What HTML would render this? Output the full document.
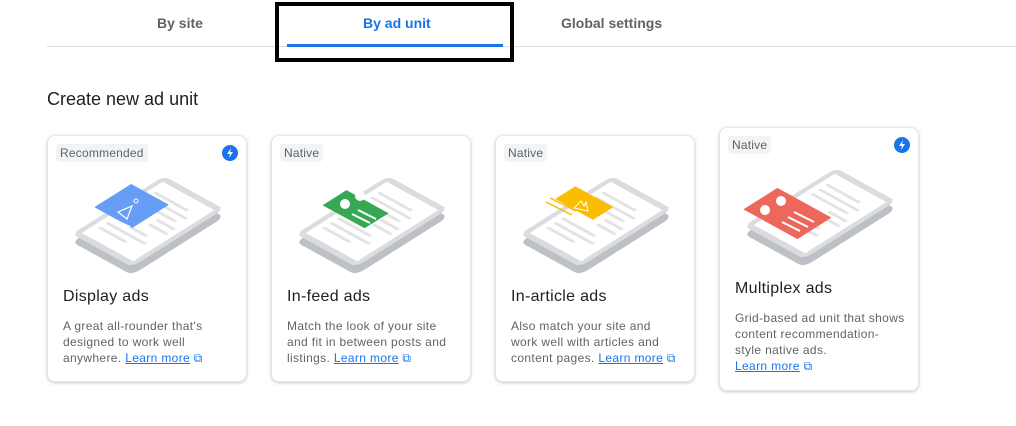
<!DOCTYPE html>
<html><head><meta charset="utf-8"><style>
body{margin:0;width:1016px;height:426px;background:#fff;font-family:"Liberation Sans",Arial,sans-serif;position:relative;overflow:hidden}
.tab{position:absolute;top:15px;font-size:14px;color:#5f6368;font-weight:bold}
.card{position:absolute;width:198px;height:245px;border:1px solid #e6e6e6;border-radius:8px;box-shadow:0 1px 3px rgba(60,64,67,.28);background:#fff}
.chip{position:absolute;left:8px;top:8px;background:#f1f3f4;border-radius:4px;font-size:12px;color:#5f6368;padding:3px 4px;line-height:12px;letter-spacing:.2px}
.bolt{position:absolute;right:8px;top:9px}
.card svg.ill{position:absolute;left:0;top:0}
.title{position:absolute;left:15px;top:152px;font-size:16px;color:#202124;letter-spacing:.3px}
.desc{position:absolute;left:15px;top:182px;width:178px;font-size:12px;line-height:16px;color:#5f6368;letter-spacing:.35px;white-space:nowrap}
.desc a{color:#1a73e8;text-decoration:underline}
</style></head><body>
<div class="tab" style="left:157px">By site</div>
<div class="tab" style="left:363px;color:#1a73e8">By ad unit</div>
<div class="tab" style="left:561px">Global settings</div>
<div style="position:absolute;left:47px;top:46px;width:969px;height:1px;background:#dadce0"></div>
<div style="position:absolute;left:287px;top:44px;width:216px;height:3px;background:#1a73e8"></div>
<div style="position:absolute;left:275px;top:2px;width:231px;height:52px;border:4px solid #000"></div>
<div style="position:absolute;left:47px;top:89px;font-size:18px;color:#202124">Create new ad unit</div>

<svg width="0" height="0" style="position:absolute"><defs>
<g id="phone">
<g transform="translate(0,8) matrix(0.6,0.33,0.92,-0.58,24,98)"><rect x="0" y="0" width="100" height="100" rx="8" fill="#bdc1c6"/></g>
<g transform="matrix(0.6,0.33,0.92,-0.58,24,98)">
<rect x="0" y="0" width="100" height="100" rx="8" fill="#dadce0"/>
<rect x="7" y="6" width="86" height="88" fill="#fff"/>
<g stroke="#e3e3e3" stroke-width="3">
<line x1="15" y1="80" x2="70" y2="80"/><line x1="15" y1="72" x2="80" y2="72"/><line x1="15" y1="64" x2="75" y2="64"/>
<line x1="15" y1="36" x2="70" y2="36"/><line x1="15" y1="28" x2="80" y2="28"/><line x1="15" y1="20" x2="60" y2="20"/>
<line x1="55" y1="56" x2="85" y2="56"/><line x1="55" y1="48" x2="85" y2="48"/>
</g></g></g>
<g id="bolt"><circle cx="8" cy="8" r="8" fill="#1a73e8"/><path d="M9 3 L5 9 H8 L7 13 L11 7 H8 Z" fill="#fff"/></g>
</defs></svg>

<div class="card" style="left:47px;top:135px">
<svg class="ill" width="200" height="150"><use href="#phone"/>
<g transform="matrix(0.6,0.33,0.92,-0.58,24,98)"><rect x="-18" y="36" width="63" height="40" fill="#669df6"/></g>
<path d="M70 76 L84 70 L79 83 Z" fill="none" stroke="#fff" stroke-width="1.2"/><circle cx="88" cy="65" r="2" fill="none" stroke="#fff"/><line x1="63" y1="82" x2="82" y2="91" stroke="#fff" stroke-width="2"/>
</svg>
<div class="chip">Recommended</div><svg class="bolt" width="16" height="16"><use href="#bolt"/></svg>
<div class="title">Display ads</div>
<div class="desc">A great all-rounder that's<br>designed to work well<br>anywhere. <a>Learn more</a> <span style="color:#1a73e8">&#x29C9;</span></div>
</div>

<div class="card" style="left:271px;top:135px">
<svg class="ill" width="200" height="150"><use href="#phone"/>
<g transform="matrix(0.6,0.33,0.92,-0.58,24,98)"><rect x="-17" y="40" width="70" height="26" fill="#34a853"/></g>
<circle cx="88" cy="60" r="5" fill="#fff"/><circle cx="73" cy="68" r="5" fill="#fff"/>
<line x1="86" y1="74" x2="104" y2="83" stroke="#fff" stroke-width="2"/><line x1="80" y1="78" x2="98" y2="87" stroke="#fff" stroke-width="2"/>
</svg>
<div class="chip">Native</div>
<div class="title">In-feed ads</div>
<div class="desc">Match the look of your site<br>and fit in between posts and<br>listings. <a>Learn more</a> <span style="color:#1a73e8">&#x29C9;</span></div>
</div>

<div class="card" style="left:495px;top:135px">
<svg class="ill" width="200" height="150"><use href="#phone"/>
<g transform="matrix(0.6,0.33,0.92,-0.58,24,98)"><rect x="-18" y="50" width="63" height="22" fill="#fbbc04"/></g>
<line x1="50" y1="66" x2="76" y2="79" stroke="#fbbc04" stroke-width="1.5"/><line x1="54" y1="62" x2="80" y2="75" stroke="#fbbc04" stroke-width="1.5"/>
<path d="M78 72 L85 65 L88 70 L90 66 L92 75 Z" fill="none" stroke="#fff" stroke-width="1"/>
</svg>
<div class="chip">Native</div>
<div class="title">In-article ads</div>
<div class="desc">Also match your site and<br>work well with articles and<br>content pages. <a>Learn more</a> <span style="color:#1a73e8">&#x29C9;</span></div>
</div>

<div class="card" style="left:719px;top:127px;height:262px">
<svg class="ill" width="200" height="150"><use href="#phone"/>
<g transform="matrix(0.6,0.33,0.92,-0.58,24,98)"><rect x="-24" y="15" width="90" height="37" fill="#ee675c"/></g>
<circle cx="61" cy="73" r="5" fill="#fff"/><circle cx="45" cy="82" r="5" fill="#fff"/>
<g stroke="#fff" stroke-width="2"><line x1="74" y1="84" x2="94" y2="94"/><line x1="68" y1="89" x2="88" y2="99"/><line x1="62" y1="94" x2="80" y2="103"/></g>
</svg>
<div class="chip">Native</div><svg class="bolt" width="16" height="16"><use href="#bolt"/></svg>
<div class="title">Multiplex ads</div>
<div class="desc">Grid-based ad unit that shows<br>content recommendation-<br>style native ads.<br><a>Learn more</a> <span style="color:#1a73e8">&#x29C9;</span></div>
</div>
</body></html>
